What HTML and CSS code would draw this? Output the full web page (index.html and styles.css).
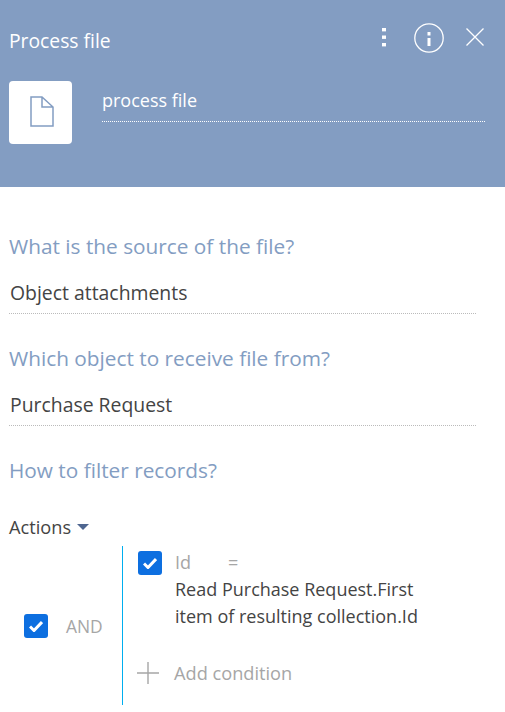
FILE: index.html
```html
<!DOCTYPE html>
<html lang="en">
<head>
<meta charset="utf-8">
<title>Process file</title>
<link rel="stylesheet" href="styles.css">
</head>
<body>
<header class="header">
  <div class="title-row">
    <div class="title">Process file</div>
    <div class="tools">
      <svg class="i-more" width="6" height="19" viewBox="0 0 6 19"><rect x="1" y="0" width="4" height="3.400" fill="#fff"/><rect x="1" y="7.500" width="4" height="3.400" fill="#fff"/><rect x="1" y="15" width="4" height="3.400" fill="#fff"/></svg>
      <svg class="i-info" width="30" height="30" viewBox="0 0 30 30"><circle cx="15" cy="15" r="14.200" fill="none" stroke="#fff" stroke-width="1.300"/><rect x="13.500" y="9" width="3" height="3.500" fill="#fff"/><rect x="13.500" y="15" width="3" height="8" fill="#fff"/></svg>
      <svg class="i-close" width="18" height="18" viewBox="0 0 18 18"><path d="M.5.5l17 17M17.500.5l-17 17" fill="none" stroke="#fff" stroke-width="1.300"/></svg>
    </div>
  </div>
  <div class="name-row">
    <div class="tile">
      <svg class="i-file" width="24" height="31" viewBox="0 0 24 31"><path d="M1 1H12L23 11V30H1Z M12 1V11H23" fill="none" stroke="#839dc2" stroke-width="1.500"/></svg>
    </div>
    <div class="name-field">process file</div>
  </div>
</header>
<main class="body">
  <div class="q q-first">What is the source of the file?</div>
  <div class="value">Object attachments</div>
  <div class="q">Which object to receive file from?</div>
  <div class="value">Purchase Request</div>
  <div class="q">How to filter records?</div>
  <div class="actions">Actions<span class="caret"></span></div>
  <div class="filter">
    <div class="group">
      <span class="check"><svg width="14" height="12" viewBox="0 0 14 12"><path d="M1 6.500l4 4L13 2" fill="none" stroke="#fff" stroke-width="3"/></svg></span>
      <span class="and">AND</span>
    </div>
    <div class="conds">
      <div class="cond">
        <span class="check"><svg width="14" height="12" viewBox="0 0 14 12"><path d="M1 6.500l4 4L13 2" fill="none" stroke="#fff" stroke-width="3"/></svg></span>
        <div class="cond-text">
          <div class="cond-head"><span>Id</span><span>=</span></div>
          <div class="cond-val">Read Purchase Request.First item of resulting collection.Id</div>
        </div>
      </div>
      <div class="add">
        <svg width="24" height="24" viewBox="0 0 24 24"><path d="M12 1v22M1 12h22" fill="none" stroke="#a6a6a6" stroke-width="1.400"/></svg>
        <span>Add condition</span>
      </div>
    </div>
  </div>
</main>
</body>
</html>
```
FILE: styles.css
```css
* { box-sizing: border-box; }
html, body { margin: 0; padding: 0; }
body {
  width: 505px;
  height: 712px;
  overflow: hidden;
  background: #fff;
  font-family: "Open Sans", "Liberation Sans", sans-serif;
  color: #444;
}
.header {
  height: 187px;
  background: #839dc2;
  color: #fff;
  padding: 23px 20px 0 9px;
}
.title-row {
  display: flex;
  align-items: center;
  justify-content: space-between;
  height: 30px;
}
.title { font-size: 19.300px; line-height: 30px; margin-top: 6px; }
.tools { display: flex; align-items: center; margin-right: 1px; }
.i-more { margin-right: 27px; margin-top: -1px; }
.i-info { margin-right: 22px; }
.i-close { margin-top: -3px; }
.name-row { display: flex; margin-top: 28px; }
.tile {
  width: 63px;
  height: 63px;
  background: #fff;
  border-radius: 4px;
  display: flex;
  align-items: center;
  justify-content: center;
  flex: none;
}
.i-file { margin: 0 0 3px 2px; }
.name-field {
  width: 383px;
  height: 41px;
  margin-left: 30px;
  font-size: 18px;
  line-height: 38px;
  border-bottom: 1px dotted #fff;
}
.body { padding: 0 29px 0 9px; }
.q { color: #839dc2; font-size: 20.800px; line-height: 28px; margin-top: 30px; }
.q-first { margin-top: 45px; }
.value {
  color: #444;
  font-size: 19.400px;
  line-height: 28px;
  height: 40px;
  padding: 5px 0 0 1px;
  margin-top: 14px;
  border-bottom: 1px dotted #bbb;
}
.actions { margin-top: 31px; font-size: 18.200px; line-height: 24px; color: #444; display: flex; align-items: center; }
.caret {
  margin-left: 6px;
  border: 6px solid transparent;
  border-top: 6px solid #4f6690;
  border-bottom: 0;
}
.filter { display: flex; margin-top: 7px; height: 159px; }
.group {
  width: 113px;
  display: flex;
  align-items: center;
  padding: 0 0 0 15px;
  color: #a6a6a6;
}
.and { font-size: 17.400px; margin-left: 18px; }
.check {
  width: 24px;
  height: 24px;
  background: #0d6fe0;
  border-radius: 3px;
  display: flex;
  align-items: center;
  justify-content: center;
  flex: none;
}
.conds { border-left: 1px solid #00aeef; padding-left: 15px; width: 320px; }
.cond { display: flex; padding-top: 5px; }
.cond-text { margin-left: 13px; margin-top: -2px; font-size: 18px; line-height: 27px; width: 262px; }
.cond-head { display: flex; gap: 37px; color: #a6a6a6; }
.cond-val { color: #444; }
.add {
  display: flex;
  align-items: center;
  margin-top: 29px;
  margin-left: -2px;
  color: #a6a6a6;
  font-size: 18.200px;
  line-height: 28px;
}
.add span { margin-left: 14px; }
```
